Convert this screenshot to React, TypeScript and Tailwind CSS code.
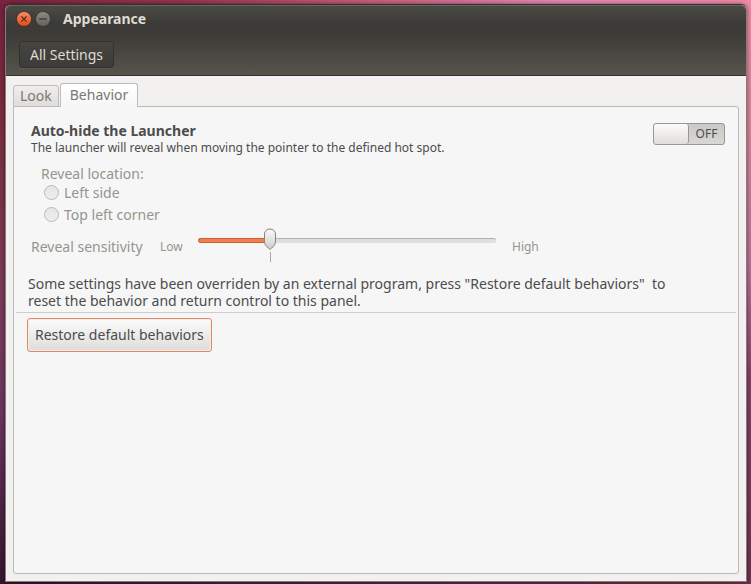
import { useState } from "react";

const TABS = ["Look", "Behavior"];

const LOCATIONS = [
  { id: "left-side", label: "Left side" },
  { id: "top-left", label: "Top left corner" },
];

export default function App() {
  const [tab, setTab] = useState("Behavior");

  return (
    <div className="flex min-h-screen flex-col pt-1 pr-1 pb-0.5 pl-[5px] font-['Noto_Sans','Open_Sans',sans-serif] text-[14px] leading-[17px] text-[#4c4c4c] [background:linear-gradient(to_right,#7a2340,#963650_25%,#c4607c_50%,#e588b4_75%,#ee8aa8)_top/100%_4px_no-repeat,linear-gradient(to_right,#35152f,#6b3350)_bottom/100%_4px_no-repeat,linear-gradient(#75213f,#7b2d3c_20%,#7c3a58_50%,#6d3560_70%,#35152f)_left/50%_100%_no-repeat,linear-gradient(#ee8aa0,#d5839a_25%,#b87299_45%,#844066_65%,#6b3350)_right/50%_100%_no-repeat]">
      <main className="flex flex-1 flex-col rounded-t-md border border-[#8b7a80] border-t-[#33322e] bg-[#f2f1f0] shadow-[0_0_4px_rgba(0,0,0,0.5)]">
        <TitleBar />
        <div className="flex h-[42px] items-center border-b border-[#34332f] bg-linear-to-b from-[#3c3b37] to-[#56544b] px-[13px]">
          <button className="h-[27px] rounded-[3px] border border-[#33322e] bg-linear-to-b from-[#45443f] to-[#3d3c38] px-2.5 text-[#dfdbd2] shadow-[0_1px_0_#5b5950]">
            All Settings
          </button>
        </div>

        <div className="flex flex-1 flex-col px-[7px] pt-[7px] pb-[7px]">
          <div role="tablist" className="relative z-10 -mb-px flex items-end gap-px">
            {TABS.map((t) => (
              <button
                key={t}
                role="tab"
                aria-selected={t === tab}
                onClick={() => setTab(t)}
                className={
                  t === tab
                    ? "h-6 rounded-t-[3px] border border-b-0 border-[#bdbcba] bg-linear-to-b from-white to-[#f6f6f6] px-[9px] pb-0.5 text-[#7a7872]"
                    : "h-[22px] rounded-t-[3px] border border-[#bdbcba] bg-linear-to-b from-[#efeeed] to-[#dfdddb] px-1.5 pb-0.5 text-[#7a7872]"
                }
              >
                {t}
              </button>
            ))}
          </div>
          <section role="tabpanel" className="flex-1 rounded-b-[3px] rounded-tr-[3px] border border-[#b9b9b6] bg-[#f6f6f6] px-0.5 pt-[15px]">
            {tab === "Behavior" && <Behavior />}
          </section>
        </div>
      </main>
    </div>
  );
}

function TitleBar() {
  return (
    <header className="flex h-[29px] items-center gap-[3px] rounded-t-[5px] border-t border-[#67655d] bg-linear-to-b from-[#4b4a45] to-[#3c3b37] to-60% px-[10px] pb-[3px]">
      <button aria-label="Close" className="size-4">
        <svg viewBox="0 0 16 16" className="size-4">
          <defs>
            <linearGradient id="close" x1="0" y1="0" x2="0" y2="1">
              <stop offset="0" stopColor="#f5916a" />
              <stop offset="1" stopColor="#e2470f" />
            </linearGradient>
          </defs>
          <circle cx="8" cy="8" r="7.5" fill="url(#close)" stroke="#2e2d2a" strokeWidth="0.7" />
          <path d="M5.4 5.4l5.2 5.2M10.6 5.4l-5.2 5.2" stroke="#572310" strokeWidth="1.2" />
        </svg>
      </button>
      <button aria-label="Minimize" className="size-4">
        <svg viewBox="0 0 16 16" className="size-4">
          <defs>
            <linearGradient id="min" x1="0" y1="0" x2="0" y2="1">
              <stop offset="0" stopColor="#8d8b83" />
              <stop offset="1" stopColor="#62615b" />
            </linearGradient>
          </defs>
          <circle cx="8" cy="8" r="7.5" fill="url(#min)" stroke="#2e2d2a" strokeWidth="0.7" />
          <path d="M4.2 8h7.600" stroke="#33322e" strokeWidth="1.2" />
        </svg>
      </button>
      <h1 className="ml-[9px] font-bold text-[#dfdbd2]">Appearance</h1>
    </header>
  );
}

function Behavior() {
  const [autoHide, setAutoHide] = useState(false);

  return (
    <>
      <div className="flex items-start justify-between pr-[11px] pl-[15px]">
        <div>
          <h2 className="font-bold">
            <label htmlFor="auto-hide">Auto-hide the Launcher</label>
          </h2>
          <p className="text-[12px] leading-[17px]">The launcher will reveal when moving the pointer to the defined hot spot.</p>
        </div>
        <label className="relative mt-px flex h-[22px] w-[72px] cursor-pointer rounded-[3px] border border-[#989793] bg-linear-to-b from-[#cbc9c5] to-[#d9d7d4] text-[12px] leading-5">
          <input
            id="auto-hide"
            type="checkbox"
            role="switch"
            checked={autoHide}
            onChange={(e) => setAutoHide(e.target.checked)}
            className="absolute inset-0 opacity-0"
          />
          {autoHide && <span className="flex-1 text-center">ON</span>}
          <span className="w-[35px] rounded-[3px] border-r border-[#989793] bg-linear-to-b from-[#fbfbfa] to-[#e0dedb]" />
          {!autoHide && <span className="flex-1 text-center">OFF</span>}
        </label>
      </div>

      <fieldset disabled={!autoHide} className={autoHide ? "" : "text-[#97948e]"}>
        <div role="radiogroup" aria-labelledby="location" className="mt-2 pl-[25px]">
          <p id="location" className="leading-[19px]">Reveal location:</p>
          {LOCATIONS.map((l) => (
            <div key={l.id} className="mb-[3px] flex items-center gap-[5px] pl-[3px]">
              <input
                type="radio"
                id={l.id}
                name="reveal"
                className="size-[15px] appearance-none rounded-full border border-[#bbb9b6] bg-linear-to-b from-[#e6e5e3] to-[#efeeed] checked:border-4 checked:border-[#dd6a3c]"
              />
              <label htmlFor={l.id} className="leading-[19px]">{l.label}</label>
            </div>
          ))}
        </div>
        <Sensitivity />
      </fieldset>

      <p className="mt-2.5 pl-3">
        Some settings have been overriden by an external program, press "Restore default behaviors"&nbsp; to
        <br />
        reset the behavior and return control to this panel.
      </p>
      <hr className="mt-[3px] border-[#cfcecd]" />
      <div className="mt-[5px] pl-[11px]">
        <button className="h-[34px] rounded-[3px] border border-[#dd8a66] bg-linear-to-b from-[#fbfbfb] to-[#dfdddb] px-[7px] pb-0.5 inset-shadow-[0_0_0_1px_#f6ece7]">
          Restore default behaviors
        </button>
      </div>
    </>
  );
}

function Sensitivity() {
  const [value, setValue] = useState(24);

  return (
    <div className="flex items-center pl-[15px]">
      <label htmlFor="sensitivity" className="w-[129px]">Reveal sensitivity</label>
      <span className="w-[38px] text-[12px]">Low</span>
      <div className="relative h-[38px] w-[298px]">
        <div className="mt-[11px] h-[5px] rounded-full border-t border-[#b3b1ae] bg-[#e0dfdd]">
          <div className="-mt-px h-[5px] rounded-full border border-[#c55f38] bg-[#f4804f]" style={{ width: `${value}%` }} />
        </div>
        <svg viewBox="0 0 14 36" className="absolute top-px h-9 w-3.5 -translate-x-1/2" style={{ left: `${value}%` }}>
          <defs>
            <linearGradient id="thumb" x1="0" y1="0" x2="0" y2="1">
              <stop offset="0" stopColor="#fafafa" />
              <stop offset="1" stopColor="#cfcdca" />
            </linearGradient>
          </defs>
          <path d="M1.500 6a5.500 5 0 0 1 11 0v8.500c0 2-3.500 5.500-5.500 7C5 20 1.500 16.500 1.500 14.500z" fill="url(#thumb)" stroke="#858480" />
          <path d="M7.500 24v10" stroke="#a9a7a4" />
        </svg>
        <input
          id="sensitivity"
          type="range"
          value={value}
          onChange={(e) => setValue(Number(e.target.value))}
          className="absolute inset-0 w-full opacity-0"
        />
      </div>
      <span className="pl-4 text-[12px]">High</span>
    </div>
  );
}
